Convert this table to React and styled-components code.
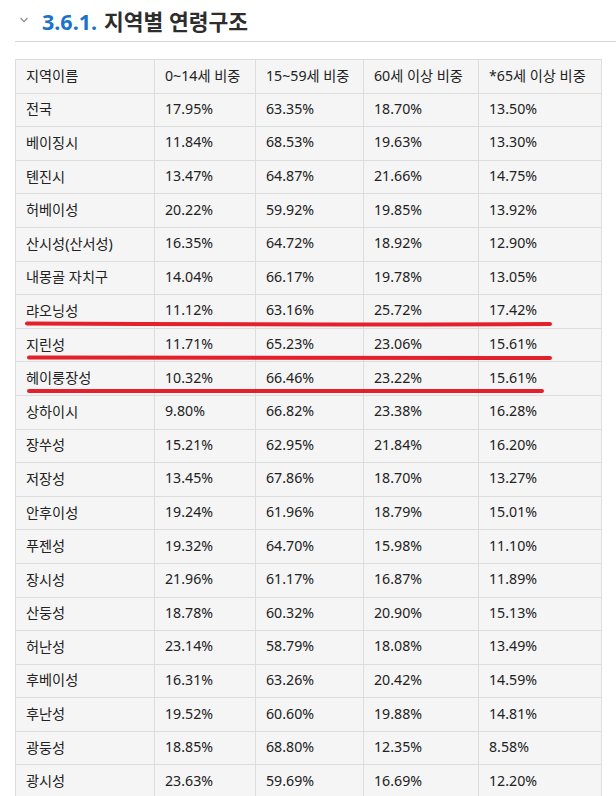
import React from 'react';
import styled, { createGlobalStyle } from 'styled-components';

const GlobalStyle = createGlobalStyle`
  body {
    margin: 0;
    background: #fff;
    font-family: "Noto Sans", "Noto Sans CJK KR", sans-serif;
    color: #222;
  }
`;

const Page = styled.div`
  width: 616px;
  height: 796px;
  overflow: hidden;
  padding-left: 15px;
  box-sizing: border-box;
`;

const Heading = styled.h3`
  display: flex;
  align-items: center;
  margin: 0 0 0 5px;
  height: 41px;
  box-sizing: border-box;
  padding-bottom: 1px;
  font-size: 21.5px;
  font-weight: 700;
  color: #2d2d2d;
`;

const Chevron = styled.svg`
  flex: none;
  margin: 0 14px 0 0;
`;

const Number = styled.span`
  color: #1a73c8;
  margin-right: 7px;
`;

const Divider = styled.div`
  height: 1px;
  background: #d6d6d6;
  margin-bottom: 17px;
`;

const TableWrap = styled.div`
  position: relative;
  width: 586px;
`;

const Table = styled.table`
  width: 586px;
  border-collapse: collapse;
  table-layout: fixed;
  background: #f5f5f5;
  font-size: 14.2px;
  color: #222;
`;

const Row = styled.tr`
  height: 33.6px;
`;

const Cell = styled.td`
  border: 1px solid #dddddd;
  padding: 0 10px 3px;
  white-space: nowrap;
  vertical-align: middle;
  text-align: left;
  font-weight: 400;
`;

const Marks = styled.svg`
  position: absolute;
  left: 0;
  top: 0;
  pointer-events: none;
`;

const widths = [139, 101, 108, 115, 123];

const header = ['지역이름', '0~14세 비중', '15~59세 비중', '60세 이상 비중', '*65세 이상 비중'];

const rows = [
  ['전국', '17.95%', '63.35%', '18.70%', '13.50%'],
  ['베이징시', '11.84%', '68.53%', '19.63%', '13.30%'],
  ['톈진시', '13.47%', '64.87%', '21.66%', '14.75%'],
  ['허베이성', '20.22%', '59.92%', '19.85%', '13.92%'],
  ['산시성(산서성)', '16.35%', '64.72%', '18.92%', '12.90%'],
  ['내몽골 자치구', '14.04%', '66.17%', '19.78%', '13.05%'],
  ['랴오닝성', '11.12%', '63.16%', '25.72%', '17.42%'],
  ['지린성', '11.71%', '65.23%', '23.06%', '15.61%'],
  ['헤이룽장성', '10.32%', '66.46%', '23.22%', '15.61%'],
  ['상하이시', '9.80%', '66.82%', '23.38%', '16.28%'],
  ['장쑤성', '15.21%', '62.95%', '21.84%', '16.20%'],
  ['저장성', '13.45%', '67.86%', '18.70%', '13.27%'],
  ['안후이성', '19.24%', '61.96%', '18.79%', '15.01%'],
  ['푸젠성', '19.32%', '64.70%', '15.98%', '11.10%'],
  ['장시성', '21.96%', '61.17%', '16.87%', '11.89%'],
  ['산둥성', '18.78%', '60.32%', '20.90%', '15.13%'],
  ['허난성', '23.14%', '58.79%', '18.08%', '13.49%'],
  ['후베이성', '16.31%', '63.26%', '20.42%', '14.59%'],
  ['후난성', '19.52%', '60.60%', '19.88%', '14.81%'],
  ['광둥성', '18.85%', '68.80%', '12.35%', '8.58%'],
  ['광시성', '23.63%', '59.69%', '16.69%', '12.20%'],
];

const App = () => {
  return (
    <Page>
      <GlobalStyle />
      <Heading>
        <Chevron width="8" height="6" viewBox="0 0 8 6">
          <path d="M0.6 1 L4 4.6 L7.4 1" fill="none" stroke="#888" strokeWidth="1.1" />
        </Chevron>
        <span>
          <Number>3.6.1.</Number>지역별 연령구조
        </span>
      </Heading>
      <Divider />
      <TableWrap>
        <Table>
          <colgroup>
            {widths.map((w, i) => (
              <col key={i} style={{ width: w }} />
            ))}
          </colgroup>
          <tbody>
            <Row>
              {header.map((h) => (
                <Cell key={h}>{h}</Cell>
              ))}
            </Row>
            {rows.map((r) => (
              <Row key={r[0]}>
                {r.map((v, i) => (
                  <Cell key={i}>{v}</Cell>
                ))}
              </Row>
            ))}
          </tbody>
        </Table>
        <Marks width="586" height="400" viewBox="0 0 586 400">
          <g fill="none" stroke="#e3202b" strokeWidth="4" strokeLinecap="round">
            <path d="M12 264.5 Q270 266 535 265" />
            <path d="M14 298.5 Q270 299.5 535 299" />
            <path d="M14 332 Q270 332.5 527 332" />
          </g>
        </Marks>
      </TableWrap>
    </Page>
  );
};

export default App;
